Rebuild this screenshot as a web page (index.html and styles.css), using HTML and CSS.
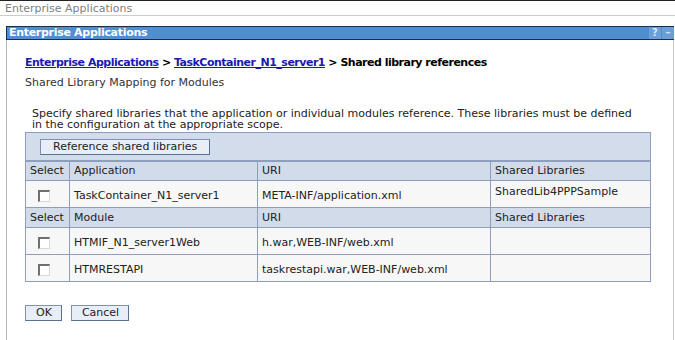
FILE: index.html
```html
<!DOCTYPE html>
<html>
<head>
  <link rel="stylesheet" href="styles.css">
</head>
<body>
  <div class="page-title">Enterprise Applications</div>

  <div class="portlet">
    <div class="portlet-bar">
      <span class="portlet-name">Enterprise Applications</span>
      <span class="bar-icons">
        <span class="bar-icon">?</span>
        <span class="bar-icon">&ndash;</span>
      </span>
    </div>

    <div class="portlet-body">
      <div class="crumbs">
        <a href="#">Enterprise Applications</a> &gt;
        <a href="#">TaskContainer_N1_server1</a> &gt; Shared library references
      </div>
      <div class="subtitle">Shared Library Mapping for Modules</div>

      <p class="intro">Specify shared libraries that the application or individual modules reference. These libraries must be defined in the configuration at the appropriate scope.</p>

      <table class="collection">
        <tr class="button-row">
          <td colspan="4"><button class="btn">Reference shared libraries</button></td>
        </tr>
        <tr class="head-row">
          <th class="col-select">Select</th>
          <th class="col-name">Application</th>
          <th class="col-uri">URI</th>
          <th class="col-libs">Shared Libraries</th>
        </tr>
        <tr class="data-row">
          <td class="col-select"><span class="checkbox"></span></td>
          <td>TaskContainer_N1_server1</td>
          <td>META-INF/application.xml</td>
          <td class="lib-cell">SharedLib4PPPSample</td>
        </tr>
        <tr class="head-row">
          <th class="col-select">Select</th>
          <th>Module</th>
          <th>URI</th>
          <th>Shared Libraries</th>
        </tr>
        <tr class="data-row">
          <td class="col-select"><span class="checkbox"></span></td>
          <td>HTMIF_N1_server1Web</td>
          <td>h.war,WEB-INF/web.xml</td>
          <td></td>
        </tr>
        <tr class="data-row">
          <td class="col-select"><span class="checkbox"></span></td>
          <td>HTMRESTAPI</td>
          <td>taskrestapi.war,WEB-INF/web.xml</td>
          <td></td>
        </tr>
      </table>

      <div class="actions">
        <button class="btn small">OK</button>
        <button class="btn small">Cancel</button>
      </div>
    </div>
  </div>
</body>
</html>
```

FILE: styles.css
```css
* {
  box-sizing: border-box;
}

body {
  margin: 0;
  width: 675px;
  height: 340px;
  overflow: hidden;
  background: #ffffff;
  font-family: "DejaVu Sans", Verdana, sans-serif;
  font-size: 11px;
  color: #222222;
}

.page-title {
  height: 16px;
  padding: 1px 0 0 5px;
  border-top: 1px solid #222222;
  border-bottom: 1px solid #cccccc;
  color: #808080;
  font-size: 11px;
  line-height: 13px;
}

.portlet {
  margin: 10px 1px 0 6px;
}

.portlet-bar {
  display: flex;
  justify-content: space-between;
  align-items: center;
  height: 14px;
  background: #4e8ed1;
  border: 1px solid #1c2f4a;
  border-right: none;
  color: #ffffff;
}

.portlet-name {
  padding-left: 2px;
  font-weight: bold;
  font-size: 11px;
  line-height: 12px;
  letter-spacing: -0.3px;
}

.bar-icons {
  display: flex;
  height: 12px;
}

.bar-icon {
  width: 12px;
  height: 12px;
  margin-left: 1px;
  background: #6a9fd8;
  color: #dbe8f7;
  font-weight: bold;
  font-size: 10px;
  line-height: 12px;
  text-align: center;
}

.portlet-body {
  height: 302px;
  padding: 16px 0 0 18px;
  border-left: 1px solid #b8b8b8;
  border-right: 1px solid #c8c8c8;
}

.crumbs {
  font-weight: bold;
  color: #000000;
  line-height: 14px;
  letter-spacing: -0.5px;
}

.crumbs a {
  color: #1a1ab0;
}

.subtitle {
  margin-top: 6px;
  color: #333333;
  line-height: 14px;
}

.intro {
  margin: 18px 0 0 7px;
  width: 612px;
  color: #222222;
  line-height: 11px;
}

.collection {
  margin-top: 2px;
  width: 626px;
  border-collapse: collapse;
  border: 1px solid #8e9fbe;
}

.collection td,
.collection th {
  border: 1px solid #8e9fbe;
  padding: 0 4px;
  text-align: left;
  font-weight: normal;
  vertical-align: middle;
}

.button-row td {
  height: 28px;
  padding: 2px 14px 0;
  background: #d3dcea;
  border-bottom: 2px solid #8e9fbe;
}

.head-row th {
  height: 20px;
  background: #d1dbea;
  color: #222222;
}

.data-row td {
  height: 27px;
  background: #f7f7f7;
  padding-top: 2px;
}

.data-row .lib-cell {
  vertical-align: top;
  padding-top: 4px;
}

.col-select {
  width: 44px;
}

.col-name {
  width: 188px;
}

.col-uri {
  width: 233px;
}

.checkbox {
  display: inline-block;
  width: 12px;
  height: 12px;
  margin-left: 8px;
  background: #ffffff;
  border-top: 2px solid #6f6f6f;
  border-left: 2px solid #6f6f6f;
  border-right: 1px solid #d8d8d8;
  border-bottom: 1px solid #d8d8d8;
  vertical-align: middle;
}

.btn {
  height: 16px;
  padding: 0 12px;
  background: #e8eef7;
  border: 1px solid #7e91b3;
  border-right-color: #5d6f90;
  border-bottom-color: #5d6f90;
  font-family: "DejaVu Sans", Verdana, sans-serif;
  font-size: 11px;
  color: #222222;
  line-height: 14px;
}

.actions {
  display: flex;
  gap: 9px;
  margin-top: 23px;
}

.btn.small {
  padding: 0 9px 0 10px;
}
```
